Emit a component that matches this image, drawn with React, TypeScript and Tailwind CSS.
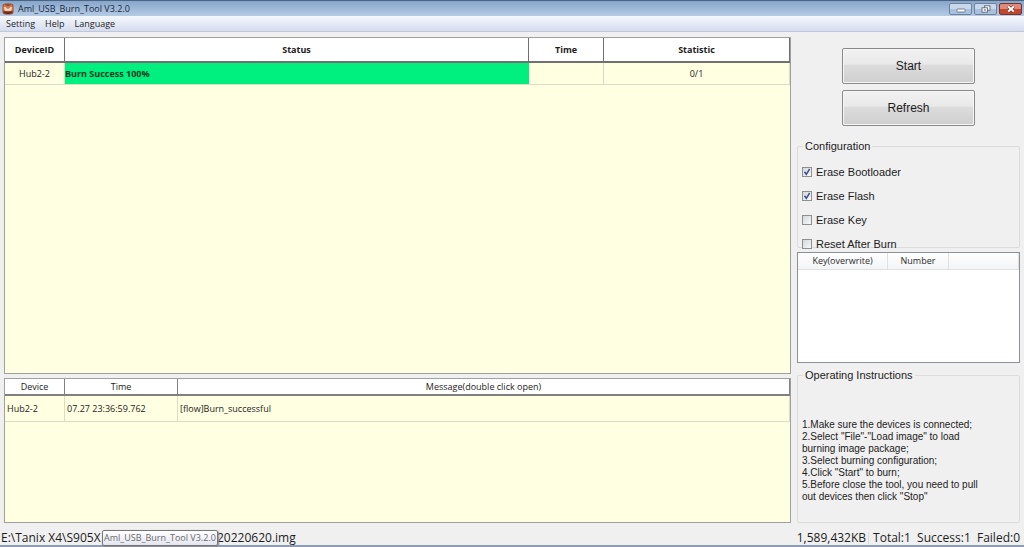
import { useState } from "react";

const TITLE = "Aml_USB_Burn_Tool V3.2.0";

const menus = ["Setting", "Help", "Language"];

const instructions = [
  "1.Make sure the devices is connected;",
  '2.Select "File"-"Load image" to load burning image package;',
  "3.Select burning configuration;",
  '4.Click "Start" to burn;',
  '5.Before close the tool, you need to pull out devices then click "Stop"',
];

interface Option {
  id: string;
  label: string;
  checked: boolean;
}

const defaultOptions: Option[] = [
  { id: "bootloader", label: "Erase Bootloader", checked: true },
  { id: "flash", label: "Erase Flash", checked: true },
  { id: "key", label: "Erase Key", checked: false },
  { id: "reset", label: "Reset After Burn", checked: false },
];

function AppIcon() {
  return (
    <svg viewBox="0 0 12 12" className="h-3 w-3 shrink-0" aria-hidden="true">
      <rect x="0.5" y="0.5" width="11" height="11" rx="3" fill="#9a4a2c" />
      <path d="M1 4.5 L2.5 1 L5 3.2 H7 L9.5 1 L11 4.5 L10.5 8 H1.5 Z" fill="#d9794a" />
      <path d="M2 4.5 C3 3.6 4.4 4.4 4.8 5.8 H7.2 C7.6 4.4 9 3.6 10 4.5 L9 7.8 H3 Z" fill="#f6dcc4" />
      <path d="M2.5 9 Q6 11.5 9.5 9" fill="none" stroke="#5d2513" strokeWidth="1.4" />
    </svg>
  );
}

function TitleBar() {
  const frame =
    "flex h-3 w-[23px] items-center justify-center rounded-xs border border-[#6f8299] bg-linear-to-b from-[#c9d9eb] from-50% to-[#a9c1dc] to-50%";
  return (
    <header className="flex h-4 items-center justify-between border-t border-[#4d6480] bg-linear-to-b from-[#87a6cb] to-[#b5cbe5] px-0.5">
      <div className="flex items-center gap-1">
        <AppIcon />
        <h1 className="text-[9px] leading-3 text-[#1b2a3d]">{TITLE}</h1>
      </div>
      <div className="flex gap-0.5">
        <button aria-label="Minimize" className={frame}>
          <svg viewBox="0 0 10 8" className="h-2 w-2.5">
            <rect x="1" y="4" width="8" height="3" rx="0.6" fill="#fff" stroke="#56677b" strokeWidth="0.8" />
          </svg>
        </button>
        <button aria-label="Restore" className={frame}>
          <svg viewBox="0 0 10 8" className="h-2 w-2.5">
            <rect x="3.5" y="0.8" width="5.5" height="4.4" fill="#fff" stroke="#56677b" strokeWidth="0.9" />
            <rect x="1" y="2.8" width="5.5" height="4.4" fill="#fff" stroke="#56677b" strokeWidth="0.9" />
            <rect x="2.8" y="4.4" width="2" height="1.2" fill="#56677b" />
          </svg>
        </button>
        <button
          aria-label="Close"
          className="flex h-3 w-[23px] items-center justify-center rounded-xs border border-[#76342f] bg-linear-to-b from-[#dd8a78] from-50% to-[#c2452e] to-50%"
        >
          <svg viewBox="0 0 10 8" className="h-2 w-2.5">
            <path d="M2.2 1.5 L7.8 6.5 M7.8 1.5 L2.2 6.5" stroke="#6b3a36" strokeWidth="3.2" />
            <path d="M2.2 1.5 L7.8 6.5 M7.8 1.5 L2.2 6.5" stroke="#fff" strokeWidth="1.9" />
          </svg>
        </button>
      </div>
    </header>
  );
}

function MenuBar() {
  return (
    <nav className="flex h-4 items-center gap-2.5 border-b border-[#bfc7da] bg-linear-to-b from-[#f5f8fd] to-[#d5dcee] pl-1.5">
      {menus.map((m) => (
        <button key={m} className="text-[9px] leading-3 text-[#1e1e1e]">
          {m}
        </button>
      ))}
    </nav>
  );
}

function DeviceTable() {
  const th = "border-r border-b-2 border-[#707070] bg-white p-0 text-center font-bold";
  const td = "border-r border-b border-[#dcdcc4] p-0 text-center";
  return (
    <div className="grow border border-[#a0a0a0] bg-[#ffffe1]">
      <table className="w-full table-fixed border-separate border-spacing-0 text-[9px] leading-3 text-[#1c1c1c]">
        <colgroup>
          <col className="w-[60px]" />
          <col />
          <col className="w-[75px]" />
          <col className="w-[186px]" />
        </colgroup>
        <thead>
          <tr className="h-[25px]">
            <th className={th}>DeviceID</th>
            <th className={th}>Status</th>
            <th className={th}>Time</th>
            <th className={th}>Statistic</th>
          </tr>
        </thead>
        <tbody>
          <tr className="h-[22px]">
            <td className={td}>Hub2-2</td>
            <td className="border-b border-[#dcdcc4] bg-[#00f080] p-0 text-left font-bold text-[#0c3a20]">
              Burn Success 100%
            </td>
            <td className={td} />
            <td className={td}>0/1</td>
          </tr>
        </tbody>
      </table>
    </div>
  );
}

function MessageTable() {
  const th = "border-r border-b-2 border-[#808080] bg-white p-0 text-center font-normal";
  const td = "border-r border-b border-[#dcdcc4] py-0 pr-0 pl-0.5 text-left";
  return (
    <div className="h-[145px] shrink-0 border border-[#a0a0a0] bg-[#ffffe1]">
      <table className="w-full table-fixed border-separate border-spacing-0 text-[9px] leading-3 text-[#1c1c1c]">
        <colgroup>
          <col className="w-[60px]" />
          <col className="w-[113px]" />
          <col />
        </colgroup>
        <thead>
          <tr className="h-[17px]">
            <th className={th}>Device</th>
            <th className={th}>Time</th>
            <th className={th}>Message(double click open)</th>
          </tr>
        </thead>
        <tbody>
          <tr className="h-[26px]">
            <td className={td}>Hub2-2</td>
            <td className={td}>07.27 23:36:59.762</td>
            <td className={td}>[flow]Burn_successful</td>
          </tr>
        </tbody>
      </table>
    </div>
  );
}

function Configuration() {
  const [options, setOptions] = useState(defaultOptions);

  const toggle = (id: string) => {
    setOptions(options.map((o) => (o.id === id ? { ...o, checked: !o.checked } : o)));
  };

  return (
    <fieldset className="h-[110px] min-w-0 rounded-xs border border-[#dcdcdc] px-1">
      <legend className="ml-px px-0.5 text-[11px] leading-4">Configuration</legend>
      <div className="flex flex-col pt-1.5">
        {options.map((o) => (
          <label key={o.id} className="flex h-6 items-center gap-1 text-[11px] leading-4">
            <span className="relative flex">
              <input
                type="checkbox"
                checked={o.checked}
                onChange={() => toggle(o.id)}
                className="h-2.5 w-2.5 appearance-none border border-[#8e8f8f] bg-linear-to-br from-[#d5d8dc] to-[#f8f8f8]"
              />
              {o.checked && (
                <svg viewBox="0 0 10 10" className="pointer-events-none absolute inset-0 h-2.5 w-2.5">
                  <path d="M2.5 4.8 L4.3 7.3 L7.6 2" fill="none" stroke="#3a5390" strokeWidth="1.5" />
                </svg>
              )}
            </span>
            {o.label}
          </label>
        ))}
      </div>
    </fieldset>
  );
}

function KeyTable() {
  const th = "border-r border-b border-[#e0e0e0] bg-linear-to-b from-white to-[#f3f4f6] p-0 font-normal";
  return (
    <div className="mt-1 h-[111px] shrink-0 border border-[#8c9097] bg-white font-['Open_Sans','Noto_Sans',sans-serif]">
      <table className="w-full table-fixed border-separate border-spacing-0 text-[9px] leading-3 text-[#2a2a2a]">
        <thead>
          <tr className="h-[17px]">
            <th className={`${th} w-[90px]`}>Key(overwrite)</th>
            <th className={`${th} w-[61px]`}>Number</th>
            <td className={th} />
          </tr>
        </thead>
      </table>
    </div>
  );
}

function SidePanel() {
  const button =
    "h-9 w-[133px] rounded-xs border border-[#8a8a8a] bg-[linear-gradient(#f2f2f2,#e9e9e9_45%,#dcdcdc_47%,#cfcfcf)] text-xs shadow-[inset_0_0_0_1px_#f6f6f6]";
  return (
    <aside className="flex w-[223px] shrink-0 flex-col font-['Liberation_Sans',Arial,sans-serif] text-[#1c1c1c]">
      <div className="flex flex-col items-center gap-1.5 pt-3 pb-3">
        <button className={button}>Start</button>
        <button className={button}>Refresh</button>
      </div>
      <Configuration />
      <KeyTable />
      <fieldset className="mt-1 min-h-0 min-w-0 grow rounded-xs border border-[#dcdcdc] px-1">
        <legend className="ml-px px-0.5 text-[11px] leading-4">Operating Instructions</legend>
        <div className="pt-9 pr-8 text-[10px] leading-3">
          {instructions.map((line) => (
            <p key={line}>{line}</p>
          ))}
        </div>
      </fieldset>
    </aside>
  );
}

function StatusBar() {
  return (
    <footer className="relative flex h-6 shrink-0 items-center justify-between border-b-2 border-[#8c9db5] pt-2 pr-1 pl-px text-xs leading-3 whitespace-pre text-[#1c1c1c]">
      <span>{"E:\\Tanix X4\\S905X"}</span>
      <span className="absolute left-[217px]">20220620.img</span>
      <div className="flex">
        <span className="border-r border-[#d8d8d8] pr-0.5">1,589,432KB</span>
        <span className="pl-1">{"Total:1  Success:1  Failed:0"}</span>
      </div>
      {/* taskbar tooltip over the image path */}
      <div
        role="tooltip"
        className="absolute top-[7px] left-[102px] flex h-4 items-center rounded-xs border border-[#767676] bg-linear-to-b from-white to-[#e4e5f0] px-px text-[9px] leading-3 text-[#6a6a6a] shadow-[1px_1px_2px_#888]"
      >
        {TITLE}
      </div>
    </footer>
  );
}

export default function App() {
  return (
    <div className="flex h-screen flex-col overflow-hidden bg-[#f0f0f0] font-['Open_Sans','Noto_Sans',sans-serif]">
      <TitleBar />
      <MenuBar />
      <main className="flex min-h-0 grow gap-1.5 px-1 pt-1">
        <div className="flex min-w-0 grow flex-col gap-1 pt-px">
          <DeviceTable />
          <MessageTable />
        </div>
        <SidePanel />
      </main>
      <StatusBar />
    </div>
  );
}
